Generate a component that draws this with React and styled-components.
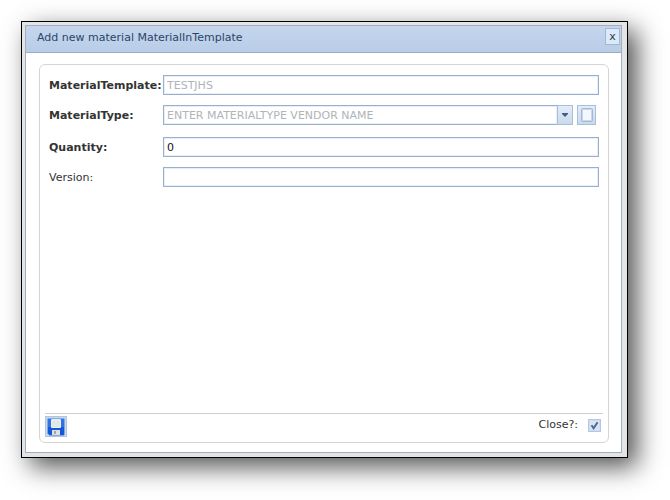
import React, { useState } from 'react'
import styled, { createGlobalStyle } from 'styled-components';

const GlobalStyle = createGlobalStyle`
    *, *::before, *::after {
        box-sizing: border-box;
    }
    body {
        margin: 0;
        background: #fff;
        color: #333;
        font-family: Verdana, "DejaVu Sans", sans-serif;
        font-size: 11px;
        line-height: 14px;
    }
    button, input {
        margin: 0;
        font: inherit;
    }
`;

let Page = styled.main`
    padding: 21px 42px 42px 21px;
`;

let Frame = styled.div`
    padding: 3px 5px 4px 3px;
    border: 1px solid #000;
    background: #e2e5e4;
    box-shadow: 9px 9px 24px rgba(0, 0, 0, 0.68);
`;

let Dialog = styled.section`
    border: 1px solid #a3afc1;
    background: #fff;
`;

let TitleBar = styled.header`
    display: flex;
    align-items: flex-start;
    justify-content: space-between;
    height: 27px;
    padding: 2px 1px 0 11px;
    border-bottom: 1px solid #9dabc0;
    background: linear-gradient(#c4d6ee, #b9cde7);
`;

let Title = styled.h1`
    margin: 0;
    padding-top: 3px;
    color: #2c4468;
    font-size: 11px;
    font-weight: normal;
`;

let CloseButton = styled.button`
    width: 15px;
    height: 17px;
    padding: 0;
    border: 1px solid #a0b7d6;
    background: #dce9f6;
    color: #23395c;
    line-height: 14px;
`;

let Form = styled.form`
    display: flex;
    flex-direction: column;
    min-height: 379px;
    margin: 11px 12px 9px 13px;
    padding: 0 5px 5px;
    border: 1px solid #d5d5d5;
    border-radius: 6px;
`;

let Fields = styled.div`
    display: flex;
    flex: 1;
    flex-direction: column;
    gap: 10px;
    padding: 10px 4px 0;
`;

let Row = styled.div`
    display: grid;
    grid-template-columns: 114px 1fr;
    align-items: center;
    padding-bottom: ${props => props.$spaced ? '2px' : '0'};
`;

let Label = styled.label`
    padding-top: 1px;
    font-weight: ${props => props.$required ? 'bold' : 'normal'};
`;

let TextBox = styled.input`
    width: 100%;
    min-width: 0;
    height: 20px;
    padding: 0 3px;
    border: 1px solid #9aafcb;
    border-radius: 0;
    outline: 0;
    background: #fff;
    color: #111;
    box-shadow: inset 0 0 0 1px #e6eef7;
    &::placeholder, &:disabled {
        color: #b0b4b9;
        opacity: 1;
    }
`;

let Combo = styled.div`
    display: flex;
    padding-right: 3px;
`;

let SmallButton = styled.button`
    display: flex;
    flex: none;
    align-items: center;
    justify-content: center;
    width: ${props => props.$width};
    height: 20px;
    padding: 0;
    border: 1px solid #a9bed9;
    background: linear-gradient(#e2edf8, #c8daec);
`;

let ArrowButton = styled(SmallButton)`
    margin: 0 4px 0 -1px;
`;

let Footer = styled.footer`
    display: flex;
    align-items: center;
    justify-content: space-between;
    padding-top: 2px;
    border-top: 1px solid #cfcfcf;
`;

let SaveButton = styled.button`
    display: flex;
    align-items: center;
    justify-content: center;
    width: 22px;
    height: 21px;
    padding: 0;
    border: 1px solid #b3c5dc;
    background: #cbd9ea;
`;

let CloseLabel = styled.label`
    display: flex;
    align-items: center;
    gap: 10px;
    padding: 0 2px 3px 0;
`;

let CheckBox = styled.input`
    appearance: none;
    width: 13px;
    height: 13px;
    border: 1px solid #b3c8e6;
    background: #dce3ee;
    box-shadow: inset 0 0 0 1px #cfddf0;
    &:checked {
        background: #dce3ee url("data:image/svg+xml,%3Csvg xmlns='http://www.w3.org/2000/svg' viewBox='0 0 11 11'%3E%3Cpath d='M2.5 5.2 4.6 8.3 8.6 2.3' fill='none' stroke='%234a6a9c' stroke-width='2'/%3E%3C/svg%3E") center / 11px 11px no-repeat;
    }
`;

const ArrowIcon = () => (
    <svg width="6" height="4" viewBox="0 0 6 4" aria-hidden="true">
        <path d="M0 0h6v1L3 4 0 1z" fill="#4c5c7e" />
    </svg>
)

const PageIcon = () => (
    <svg width="12" height="14" viewBox="0 0 12 14" aria-hidden="true">
        <rect x="0.5" y="0.5" width="11" height="13" rx="1" fill="#c9d6ef" stroke="#a6b5da" />
        <rect x="2" y="2" width="8" height="10" fill="#f4f8fd" />
    </svg>
)

const SaveIcon = () => (
    <svg width="18" height="18" viewBox="0 0 18 18" aria-hidden="true">
        <path d="M1.5 0.5h15q1 0 1 1v15l-1 1h-14l-2-2v-14q0-1 1-1z" fill="#2f74e6" stroke="#7fa9ea" />
        <path d="M1 9h16v7l-1 1H3l-2-2z" fill="#1457d8" />
        <rect x="4" y="1" width="10" height="9" rx="1" fill="#e9eeee" />
        <path d="M5 4h8M5 6h8M5 8h8" stroke="#dbe1df" />
        <rect x="5" y="12" width="8" height="5" fill="#dfe1e0" />
        <rect x="7" y="13" width="2" height="3" fill="#a8a69c" />
    </svg>
)

const App = () => {
    const [quantity, setQuantity] = useState('0')
    const [closeAfter, setCloseAfter] = useState(true)

    return (
        <Page>
            <GlobalStyle />
            <Frame>
                <Dialog role="dialog" aria-labelledby="dialog-title">
                    <TitleBar>
                        <Title id="dialog-title">Add new material MaterialInTemplate</Title>
                        <CloseButton type="button" aria-label="Close">x</CloseButton>
                    </TitleBar>
                    <Form onSubmit={e => e.preventDefault()}>
                        <Fields>
                            <Row>
                                <Label htmlFor="template" $required>MaterialTemplate:</Label>
                                <TextBox id="template" defaultValue="TESTJHS" disabled />
                            </Row>
                            <Row $spaced>
                                <Label htmlFor="type" $required>MaterialType:</Label>
                                <Combo>
                                    <TextBox id="type" placeholder="ENTER MATERIALTYPE VENDOR NAME" />
                                    <ArrowButton type="button" $width="16px" aria-label="Show material types"><ArrowIcon /></ArrowButton>
                                    <SmallButton type="button" $width="19px" aria-label="New material type"><PageIcon /></SmallButton>
                                </Combo>
                            </Row>
                            <Row>
                                <Label htmlFor="quantity" $required>Quantity:</Label>
                                <TextBox id="quantity" value={quantity} onChange={e => setQuantity(e.target.value)} />
                            </Row>
                            <Row>
                                <Label htmlFor="version">Version:</Label>
                                <TextBox id="version" />
                            </Row>
                        </Fields>
                        <Footer>
                            <SaveButton type="submit" aria-label="Save"><SaveIcon /></SaveButton>
                            <CloseLabel>
                                Close?:
                                <CheckBox
                                    type="checkbox"
                                    checked={closeAfter}
                                    onChange={e => setCloseAfter(e.target.checked)}
                                />
                            </CloseLabel>
                        </Footer>
                    </Form>
                </Dialog>
            </Frame>
        </Page>
    )
}

export default App
